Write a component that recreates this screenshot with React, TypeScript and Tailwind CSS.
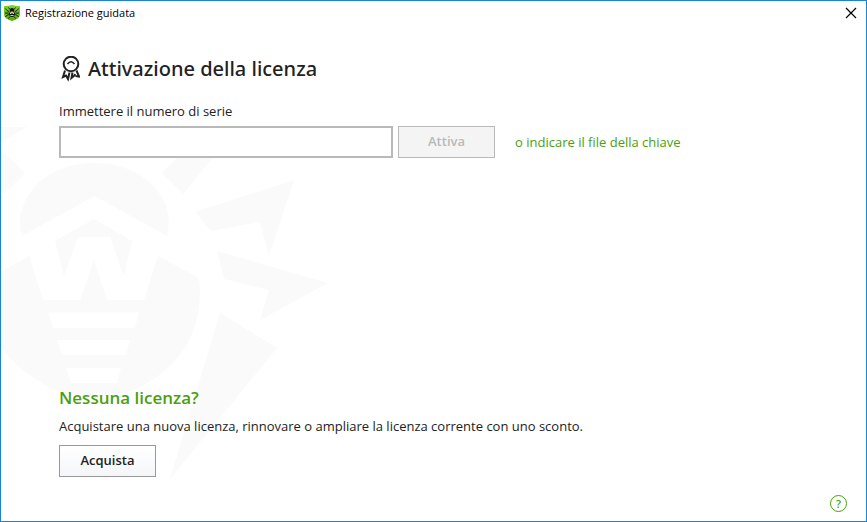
import { useState } from "react"

const SpiderShield = () => (
  <svg width="16" height="16" viewBox="0 0 16 16" aria-hidden="true">
    <defs>
      <linearGradient id="shield" x2="0" y2="1">
        <stop stopColor="#82d42c" />
        <stop offset="1" stopColor="#54a810" />
      </linearGradient>
    </defs>
    <path d="M0 1Q4.500 1 8 0q3.500 1 8 1V9.500q0 4-8 6.500Q0 13.500 0 9.500z" fill="url(#shield)" />
    <path d="M8 3c1.300 0 2 .8 2 2l1.200 3c0 2.200-1.200 4-3.200 4s-3.200-1.800-3.200-4L6 5c0-1.200.7-2 2-2z" fill="#111" />
    <path
      d="M6 4.500 4.500 2.500M10 4.500l1.500-2M5 6.500 3 5.500 1.500 3.500M11 6.500l2-1 1.500-2M4.500 8H1M11.500 8H15M5 9.500l-2.500 1-1 1.500M11 9.500l2.500 1 1 1.500M6 11.500l-1.500 2M10 11.500l1.500 2"
      fill="none"
      stroke="#111"
      strokeWidth=".9"
    />
    <path d="m5.800 6.500.9 2.500L8 6.500 9.300 9l.9-2.500M6.500 10.500h3" fill="none" stroke="#d9edc4" strokeWidth=".9" />
  </svg>
)

const AwardIcon = () => (
  <svg
    width="21"
    height="26"
    viewBox="0 0 21 26"
    fill="none"
    stroke="#222"
    strokeWidth="2"
    strokeLinejoin="miter"
    aria-hidden="true"
  >
    <circle cx="12" cy="8" r="7.300" />
    <path d="M8.500 8q3.500-4.500 7 0" strokeWidth="1.500" />
    <path d="M6 14.500 4 21l3-1.500L9 23l1.500-6.500M13.500 16.500 12.500 22l3-2.500.5-1.500M17.500 14.500l2.500 6-3.500-.5" />
  </svg>
)

const Watermark = () => (
  <svg
    className="pointer-events-none absolute top-0 left-0 -z-10"
    width="340"
    height="490"
    viewBox="1 1 340 490"
    fill="#fafafa"
    aria-hidden="true"
  >
    {/* head */}
    <path d="M22 236C12 202 42 163 94.500 163S177 202 167 236L94.500 196z" />
    <path d="m94 219 38 22-8 35-14-39H78l-14 39-9-35z" />
    {/* body */}
    <path d="M-10 278 29 256 43 300H80L94 260l13 40h37l14-44 41 22C205 330 180 370 133 390Q94 404 55 390 12 370-10 330z" />
    <path d="M48 312.500h91L135 328H53zM57 340h73l-4 15H62zM66 368h55l-4 15H71z" fill="#fff" />
    {/* legs */}
    <path d="M0 127h27L0 143zM0 149l25 24-21 21-4-4z" />
    <path d="m162 173 20-20h34l-33 41z" />
    <path d="m195 212 99-32-25 76-9-34-49 9z" />
    <path d="m217 251 111 32-68 37 9-30-45-11z" />
    <path d="m220 313 57 35-107 131z" />
  </svg>
)

export default function App() {
  const [serial, setSerial] = useState("")

  return (
    <div className="relative isolate flex min-h-screen flex-col border border-[#1883d7] bg-white font-['Open_Sans','Noto_Sans',sans-serif] text-[13px] text-[#222]">
      <Watermark />

      <header className="flex h-6 items-center justify-between pr-[7px] pl-[3px] text-[11px] text-black">
        <div className="flex items-center gap-[5px]">
          <SpiderShield />
          <span>Registrazione guidata</span>
        </div>
        <button aria-label="Chiudi" className="flex h-4 w-4 items-center justify-center">
          <svg width="12" height="12" viewBox="0 0 12 12" stroke="#000" strokeWidth="1.200">
            <path d="m1 1 10 10M11 1 1 11" />
          </svg>
        </button>
      </header>

      <main className="flex flex-1 flex-col px-[58px] pt-7">
        <h1 className="flex h-8 items-center gap-2 font-['Noto_Sans',sans-serif] text-xl font-medium">
          <AwardIcon />
          Attivazione della licenza
        </h1>

        <form className="mt-4" onSubmit={(e) => e.preventDefault()}>
          <label htmlFor="serial" className="block leading-5">
            Immettere il numero di serie
          </label>
          <div className="mt-[5px] flex items-center">
            <input
              id="serial"
              type="text"
              value={serial}
              onChange={(e) => setSerial(e.target.value)}
              className="h-8 w-[334px] border-2 border-[#b9b9b9] bg-white px-2 outline-none"
            />
            <button
              type="submit"
              disabled={!serial}
              className="ml-[5px] h-8 w-[97px] border border-[#b9b9b9] bg-[#f4f4f4] font-semibold text-[#b9b9b9]"
            >
              Attiva
            </button>
            <a href="#key" className="ml-5 leading-5 text-[#4a9f0f]">
              o indicare il file della chiave
            </a>
          </div>
        </form>

        <section className="mt-auto">
          <h2 className="text-[17px] leading-6 font-semibold text-[#4a9f0f]">Nessuna licenza?</h2>
          <p className="mt-1 leading-6">
            Acquistare una nuova licenza, rinnovare o ampliare la licenza corrente con uno sconto.
          </p>
          <button className="mt-[7px] h-8 w-[97px] border border-[#999] bg-linear-to-b from-white to-[#f4f6f9] font-semibold">
            Acquista
          </button>
        </section>
      </main>

      <footer className="flex h-11 items-end justify-end pr-[19px] pb-[9px]">
        <button aria-label="Guida" className="flex h-[17px] w-[17px] items-center justify-center rounded-full border border-[#4a9f0f] text-[11px] leading-none font-semibold text-[#4a9f0f]">
          ?
        </button>
      </footer>
    </div>
  )
}
